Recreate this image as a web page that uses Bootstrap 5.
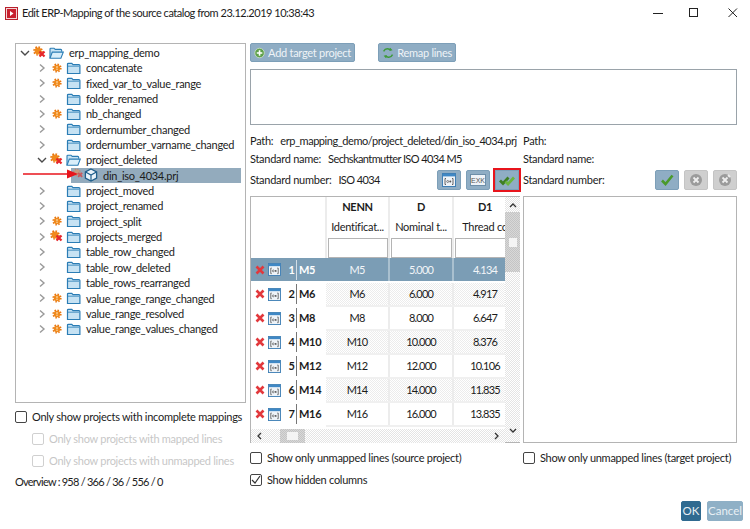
<!DOCTYPE html>
<html lang="en">
<head>
    <meta charset="UTF-8">
    <meta name="viewport" content="width=device-width, initial-scale=1.0">
    <title>Edit ERP-Mapping</title>
    <link href="https://cdn.jsdelivr.net/npm/bootstrap@5.3.0/dist/css/bootstrap.min.css" rel="stylesheet">
    <style>
        body {
            background: #fff;
            color: #1c1c1c;
            font-family: "Lato", "Liberation Sans", sans-serif;
            font-size: 11px;
            letter-spacing: -0.27px;
            line-height: 16px;
            height: 529px;
            overflow: hidden;
        }
        .win-title { height: 26px; padding-left: 5px; font-size: 11px; letter-spacing: -0.48px; }
        .win-title .title-text { margin-left: 4px; }
        .win-ctrls { padding-right: 12px; }
        .ctrl-max { margin: 0 29px 0 26px; }
        .dlg-main { padding: 17px 7px 0 15px; gap: 4px; }
        .left-col { width: 231px; flex: none; }
        .right-col { width: 487px; flex: none; }
        .tree-box { height: 360px; border: 1px solid #b4b4b4; padding-top: 1px; position: relative; }
        .tree-row { height: 15.35px; line-height: 15.35px; white-space: nowrap; }
        .lvl0 { margin-left: 2px; }
        .lvl1 { margin-left: 19px; }
        .lvl2 { margin-left: 55px; width: 170px; background: #93abbd; padding-left: 1px; }
        .s-chev { width: 14px; flex: none; }
        .s-mark { width: 17px; flex: none; }
        .s-fold { width: 15px; flex: none; margin-right: 5px; }
        .s-gear2 { width: 12px; flex: none; }
        .s-cube { flex: none; margin-right: 5px; }
        .tree-arrow { position: absolute; left: 7px; top: 125px; }

        .check-line { margin: 0; padding: 0; min-height: 0; gap: 5px; white-space: nowrap; }
        .check-line .form-check-input {
            float: none; margin: 0; width: 12px; height: 12px; flex: none;
            border: 1px solid #444; border-radius: 2px; background-color: #fff; opacity: 1;
        }
        .check-line .form-check-input:checked {
            background-color: #fff; border-color: #444;
            background-image: url("data:image/svg+xml,%3csvg xmlns='http://www.w3.org/2000/svg' viewBox='0 0 12 12'%3e%3cpath fill='none' stroke='%23333' stroke-width='1.2' d='M2 6l3 3 5-7'/%3e%3c/svg%3e");
            background-size: 12px 12px;
        }
        .check-line .form-check-input:disabled { border-color: #d0d0d0; }
        .check-line .form-check-label { opacity: 1; color: inherit; }
        .check-line.off .form-check-label { color: #8f8f8f; }
        .opts-left { padding-top: 3px; }
        .opts-left .check-line { height: 22px; }
        .opts-left .sub-opt { margin-left: 17px; }
        .overview-line { height: 20px; line-height: 20px; letter-spacing: -0.75px; }

        .blue-btn {
            --bs-btn-padding-x: 0; --bs-btn-padding-y: 0;
            --bs-btn-font-size: 11px; --bs-btn-line-height: 17px;
            --bs-btn-border-radius: 2px;
            background: #8fadc4; border: 1px solid #7d9fb8; color: #eef3f7;
            height: 19px; display: inline-flex; align-items: center; gap: 3px; padding: 0 3px;
            white-space: nowrap; letter-spacing: -0.27px;
        }
        .blue-btn:disabled { background: #8fadc4; border-color: #7d9fb8; color: #eef3f7; opacity: 1; }
        .btn-add { width: 105px; }
        .btn-remap { width: 78px; }
        .btn-row { height: 19px; gap: 23px; margin-bottom: 7px; }
        .note-box { height: 56px; border: 1px solid #9aa3aa; margin-bottom: 7px; }
        .src-col { width: 270px; flex: none; }
        .tgt-col { width: 214px; flex: none; margin-left: 3px; }
        .info-line { height: 18px; line-height: 18px; white-space: nowrap; }
        .info-line .info-val { margin-left: 7px; letter-spacing: -0.6px; }
        .info-line .info-path { letter-spacing: -0.45px; }
        .num-line { height: 24px; margin-bottom: 4px; align-items: center; }
        .tool-btn {
            width: 24px; height: 20px; border-radius: 2px; border: 1px solid #7d9fb8; background: #8fadc4;
            display: flex; align-items: center; justify-content: center; padding: 0;
        }
        .tool-btn.grey { background: #cfcfcf; border-color: #c4c4c4; }
        .tool-btn.marked { outline: 2px solid #e8141c; outline-offset: 0; border-radius: 0; }
        .tools-src { gap: 5px; margin-right: 1px; }
        .tools-tgt { gap: 5px; }
        .grid-wrap { height: 247px; border: 1px solid #b4b4b4; }
        .grid-view { width: 254px; flex: none; }
        .grid-clip { height: 232px; overflow: hidden; }
        .map-table { width: 266px; table-layout: fixed; margin: 0; }
        .map-table > :not(caption) > * > * {
            padding: 0; border: 0; box-shadow: none; color: #1c1c1c; background: #fff;
            text-align: center; vertical-align: middle; white-space: nowrap; overflow: hidden;
            border-right: 2px solid #ececec;
        }
        .map-table .head-a > * { height: 20px; font-weight: 700; }
        .map-table .head-b > * { height: 20px; font-weight: 400; }
        .map-table .head-c > * { height: 21px; padding: 0 0 0 1px; }
        .filter-box { display: block; width: 100%; height: 20px; border: 1px solid #b4b4b4; background: #fff; }
        .map-table tbody td { height: 24px; border-bottom: 2px solid #f0f0f0; letter-spacing: -0.8px; }
        .map-table tbody tr.alt td:not(.row-head) {
            background: conic-gradient(#ececec 25%, #fff 0 50%, #ececec 0 75%, #fff 0) 0 0 / 2px 2px;
        }
        .map-table tbody tr.sel td, .map-table tbody tr.sel td.row-head {
            background: #7b9db5; color: #f2f5f8; border-bottom-color: #fff; border-right-color: #a9c0cf;
        }
        .map-table tbody tr.sel td.row-head { color: #fff; }
        .map-table .row-head { text-align: left; border-right: 0; border-bottom-color: #fff; }
        .row-inner { gap: 0; align-items: center; height: 22px; padding-left: 4px; font-weight: 700; }
        .row-icon { margin-left: 3px; flex: none; }
        .row-no { width: 15px; text-align: right; padding-right: 2px; }
        .row-name { border-left: 1px solid #777; padding-left: 2px; line-height: 20px; letter-spacing: -0.3px; }
        .sel .row-name { border-left-color: #d3dee6; }
        .sb-v {
            width: 15px; flex: none; position: relative;
            background: conic-gradient(#e4e4e4 25%, #fff 0 50%, #e4e4e4 0 75%, #fff 0) 0 0 / 2px 2px;
        }
        .sb-v-up { height: 15px; }
        .sb-v-thumb {
            height: 60px; background: conic-gradient(#c4c4c4 25%, #d8d8d8 0 50%, #c4c4c4 0 75%, #d8d8d8 0) 0 0 / 2px 2px;
            padding-top: 26px;
        }
        .sb-v-thumb > div { width: 8px; height: 9px; background: #f4f4f4; margin: 0 auto; }
        .sb-h {
            height: 14px; padding: 0 5px;
            background: conic-gradient(#e4e4e4 25%, #fff 0 50%, #e4e4e4 0 75%, #fff 0) 0 0 / 2px 2px;
        }
        .sb-h-thumb {
            width: 25px; height: 14px; margin-left: 18px;
            background: conic-gradient(#c4c4c4 25%, #d8d8d8 0 50%, #c4c4c4 0 75%, #d8d8d8 0) 0 0 / 2px 2px;
            padding: 3px 7px;
        }
        .sb-h-thumb > div { height: 8px; background: #f4f4f4; }
        .target-box { height: 247px; border: 1px solid #b4b4b4; }
        .opts-line { height: 22px; }
        .opts-first { margin-top: 4px; }
        .dlg-foot { position: absolute; right: 7px; bottom: 8px; gap: 6px; }
        .foot-btn {
            --bs-btn-padding-x: 0; --bs-btn-padding-y: 0; --bs-btn-font-size: 11.5px; --bs-btn-border-radius: 2px;
            height: 20px; line-height: 18px; border: 1px solid transparent; color: #e8eff4;
        }
        .foot-ok { width: 20px; background: #2f6a90; border-color: #2f6a90; }
        .foot-cancel { width: 36px; background: #8fb0c6; border-color: #8fb0c6; }
        .foot-cancel:disabled { background: #8fb0c6; border-color: #8fb0c6; color: #e8eff4; opacity: 1; }
    </style>
</head>
<body>
    <svg width="0" height="0" class="position-absolute">
        <defs>
            <symbol id="i-chev-r" viewBox="0 0 14 14"><path d="M5 3.5l4 3.5-4 3.5" fill="none" stroke="#9a9a9a" stroke-width="1.4"/></symbol>
            <symbol id="i-chev-d" viewBox="0 0 14 14"><path d="M3 5l4 4 4-4" fill="none" stroke="#4a4a4a" stroke-width="1.4"/></symbol>
            <symbol id="i-gear" viewBox="0 0 12 12">
                <circle cx="6" cy="6" r="3.2" fill="#f08a1c"/>
                <circle cx="6" cy="6" r="3.8" fill="none" stroke="#e8760e" stroke-width="1.6" stroke-dasharray="1.5 1.49"/>
                <rect x="5.4" y="4" width="1.2" height="2.4" fill="#fbd9a8"/>
                <rect x="5.4" y="7" width="1.2" height="1" fill="#fbd9a8"/>
            </symbol>
            <symbol id="i-gear-x" viewBox="0 0 16 14">
                <circle cx="6" cy="5" r="3.4" fill="#f08a1c"/>
                <circle cx="6" cy="5" r="4" fill="none" stroke="#e8760e" stroke-width="1.6" stroke-dasharray="1.6 1.54"/>
                <path d="M7.5 5.5l5 5M12.5 5.5l-5 5" stroke="#e6252a" stroke-width="2.2"/>
            </symbol>
            <symbol id="i-gear-xf" viewBox="0 0 16 14">
                <circle cx="6" cy="5" r="3.4" fill="#c79a80"/>
                <circle cx="6" cy="5" r="4" fill="none" stroke="#bf8a70" stroke-width="1.6" stroke-dasharray="1.6 1.54"/>
                <path d="M7.5 5.5l5 5M12.5 5.5l-5 5" stroke="#c9575c" stroke-width="2.2"/>
            </symbol>
            <symbol id="i-folder" viewBox="0 0 15 14">
                <path d="M1.5 12.5V3.2q0-.9.9-.9h3.4l1.2 1.3h5.9q1 0 1 1v7.9z" fill="#c6e2f3" stroke="#2b7db5" stroke-width="1.2"/>
                <path d="M2 5.2h11" stroke="#2b7db5" stroke-width=".8"/>
            </symbol>
            <symbol id="i-folder-open" viewBox="0 0 15 14">
                <path d="M1 12V3q0-.8.8-.8h3.2l1.2 1.2h5.6q.9 0 .9 1v1.4" fill="#c6e2f3" stroke="#2b7db5" stroke-width="1.1"/>
                <path d="M1 12.3l2.3-6.2h11l-2.4 6.2z" fill="#d9eefa" stroke="#2b7db5" stroke-width="1.1"/>
            </symbol>
            <symbol id="i-cube" viewBox="0 0 14 14">
                <path d="M7 1l5.6 3v6L7 13l-5.6-3V4z" fill="#eaf4fa" stroke="#1f5f8b" stroke-width="1.3"/>
                <path d="M1.6 4L7 7l5.4-3M7 7v6" fill="none" stroke="#1f5f8b" stroke-width="1.2"/>
            </symbol>
            <symbol id="i-x" viewBox="0 0 10 10"><path d="M1.5 1.5l7 7M8.5 1.5l-7 7" stroke="#e2383c" stroke-width="2.6"/></symbol>
            <symbol id="i-bracket" viewBox="0 0 14 14">
                <rect x=".5" y=".5" width="13" height="13" fill="#eef3f8" stroke="#3f7fb5"/>
                <rect x="1" y="1" width="12" height="2.4" fill="#3f88c5"/>
                <path d="M4 5.5H3v6h1M10 5.5h1v6h-1" fill="none" stroke="#555" stroke-width=".9"/>
                <circle cx="5.7" cy="8.5" r="1" fill="none" stroke="#555" stroke-width=".7"/>
                <circle cx="8.3" cy="8.5" r="1" fill="#555"/>
            </symbol>
            <symbol id="i-check2" viewBox="0 0 16 12">
                <path d="M1 6.5l3 3 5.5-6" fill="none" stroke="#3e7f22" stroke-width="2.8"/>
                <path d="M6.5 7.5l2.5 2.5 6-6.5" fill="none" stroke="#6bb53f" stroke-width="2.8"/>
            </symbol>
            <symbol id="i-check" viewBox="0 0 14 12"><path d="M2 6.5l3.5 3.5L12.5 1.5" fill="none" stroke="#4a9a2c" stroke-width="2.6"/></symbol>
        </defs>
    </svg>

    <div class="win-title d-flex align-items-center justify-content-between">
        <div class="d-flex align-items-center">
            <svg width="13" height="13" viewBox="0 0 13 13"><rect x=".5" y=".5" width="12" height="12" fill="#f3d6d6" stroke="#b81f2c"/><rect x="2" y="2" width="9" height="9" fill="#c8202e"/><path d="M5 4l3.5 2.5L5 9z" fill="#fff"/></svg>
            <span class="title-text">Edit ERP-Mapping of the source catalog from 23.12.2019 10:38:43</span>
        </div>
        <div class="win-ctrls d-flex align-items-center">
            <svg width="10" height="10" viewBox="0 0 10 10"><path d="M0 5.5h10" stroke="#222"/></svg>
            <svg width="10" height="10" viewBox="0 0 10 10" class="ctrl-max"><rect x=".5" y=".5" width="8" height="8" fill="none" stroke="#222"/></svg>
            <svg width="10" height="10" viewBox="0 0 10 10"><path d="M.5.5l8.5 8.5M9 .5L.5 9" stroke="#222"/></svg>
        </div>
    </div>

    <div class="dlg-main d-flex">
        <div class="left-col">
            <div class="tree-box">
                <div class="tree-row lvl0 d-flex align-items-center"><svg class="s-chev" height="14"><use href="#i-chev-d"/></svg><svg class="s-mark" height="14" viewBox="0 0 17 14"><use href="#i-gear-x" width="16" height="14"/></svg><svg class="s-fold" height="14"><use href="#i-folder-open"/></svg>erp_mapping_demo</div>
                <div class="tree-row lvl1 d-flex align-items-center"><svg class="s-chev" height="14"><use href="#i-chev-r"/></svg><svg class="s-mark" height="12" viewBox="0 0 17 12"><use href="#i-gear" x="2" width="12" height="12"/></svg><svg class="s-fold" height="14"><use href="#i-folder"/></svg>concatenate</div>
                <div class="tree-row lvl1 d-flex align-items-center"><svg class="s-chev" height="14"><use href="#i-chev-r"/></svg><svg class="s-mark" height="12" viewBox="0 0 17 12"><use href="#i-gear" x="2" width="12" height="12"/></svg><svg class="s-fold" height="14"><use href="#i-folder"/></svg>fixed_var_to_value_range</div>
                <div class="tree-row lvl1 d-flex align-items-center"><svg class="s-chev" height="14"><use href="#i-chev-r"/></svg><span class="s-mark"></span><svg class="s-fold" height="14"><use href="#i-folder"/></svg>folder_renamed</div>
                <div class="tree-row lvl1 d-flex align-items-center"><svg class="s-chev" height="14"><use href="#i-chev-r"/></svg><svg class="s-mark" height="12" viewBox="0 0 17 12"><use href="#i-gear" x="2" width="12" height="12"/></svg><svg class="s-fold" height="14"><use href="#i-folder"/></svg>nb_changed</div>
                <div class="tree-row lvl1 d-flex align-items-center"><svg class="s-chev" height="14"><use href="#i-chev-r"/></svg><span class="s-mark"></span><svg class="s-fold" height="14"><use href="#i-folder"/></svg>ordernumber_changed</div>
                <div class="tree-row lvl1 d-flex align-items-center"><svg class="s-chev" height="14"><use href="#i-chev-r"/></svg><span class="s-mark"></span><svg class="s-fold" height="14"><use href="#i-folder"/></svg>ordernumber_varname_changed</div>
                <div class="tree-row lvl1 d-flex align-items-center"><svg class="s-chev" height="14"><use href="#i-chev-d"/></svg><svg class="s-mark" height="14" viewBox="0 0 17 14"><use href="#i-gear-x" width="16" height="14"/></svg><svg class="s-fold" height="14"><use href="#i-folder-open"/></svg>project_deleted</div>
                <div class="tree-row lvl2 d-flex align-items-center"><svg class="s-gear2" height="14"><use href="#i-gear-xf" width="13" height="12"/></svg><svg width="14" height="14" class="s-cube"><use href="#i-cube"/></svg><span>din_iso_4034.prj</span></div>
                <div class="tree-row lvl1 d-flex align-items-center"><svg class="s-chev" height="14"><use href="#i-chev-r"/></svg><span class="s-mark"></span><svg class="s-fold" height="14"><use href="#i-folder"/></svg>project_moved</div>
                <div class="tree-row lvl1 d-flex align-items-center"><svg class="s-chev" height="14"><use href="#i-chev-r"/></svg><span class="s-mark"></span><svg class="s-fold" height="14"><use href="#i-folder"/></svg>project_renamed</div>
                <div class="tree-row lvl1 d-flex align-items-center"><svg class="s-chev" height="14"><use href="#i-chev-r"/></svg><svg class="s-mark" height="12" viewBox="0 0 17 12"><use href="#i-gear" x="2" width="12" height="12"/></svg><svg class="s-fold" height="14"><use href="#i-folder"/></svg>project_split</div>
                <div class="tree-row lvl1 d-flex align-items-center"><svg class="s-chev" height="14"><use href="#i-chev-r"/></svg><svg class="s-mark" height="14" viewBox="0 0 17 14"><use href="#i-gear-x" width="16" height="14"/></svg><svg class="s-fold" height="14"><use href="#i-folder"/></svg>projects_merged</div>
                <div class="tree-row lvl1 d-flex align-items-center"><svg class="s-chev" height="14"><use href="#i-chev-r"/></svg><span class="s-mark"></span><svg class="s-fold" height="14"><use href="#i-folder"/></svg>table_row_changed</div>
                <div class="tree-row lvl1 d-flex align-items-center"><svg class="s-chev" height="14"><use href="#i-chev-r"/></svg><span class="s-mark"></span><svg class="s-fold" height="14"><use href="#i-folder"/></svg>table_row_deleted</div>
                <div class="tree-row lvl1 d-flex align-items-center"><svg class="s-chev" height="14"><use href="#i-chev-r"/></svg><span class="s-mark"></span><svg class="s-fold" height="14"><use href="#i-folder"/></svg>table_rows_rearranged</div>
                <div class="tree-row lvl1 d-flex align-items-center"><svg class="s-chev" height="14"><use href="#i-chev-r"/></svg><svg class="s-mark" height="12" viewBox="0 0 17 12"><use href="#i-gear" x="2" width="12" height="12"/></svg><svg class="s-fold" height="14"><use href="#i-folder"/></svg>value_range_range_changed</div>
                <div class="tree-row lvl1 d-flex align-items-center"><svg class="s-chev" height="14"><use href="#i-chev-r"/></svg><svg class="s-mark" height="12" viewBox="0 0 17 12"><use href="#i-gear" x="2" width="12" height="12"/></svg><svg class="s-fold" height="14"><use href="#i-folder"/></svg>value_range_resolved</div>
                <div class="tree-row lvl1 d-flex align-items-center"><svg class="s-chev" height="14"><use href="#i-chev-r"/></svg><svg class="s-mark" height="12" viewBox="0 0 17 12"><use href="#i-gear" x="2" width="12" height="12"/></svg><svg class="s-fold" height="14"><use href="#i-folder"/></svg>value_range_values_changed</div>
                <svg class="tree-arrow" width="55" height="10" viewBox="0 0 55 10"><path d="M0 5h46" stroke="#e8141c" stroke-width="1.4"/><path d="M44 .5L55 5 44 9.5z" fill="#e8141c"/></svg>
            </div>
            <div class="opts-left">
                <div class="form-check check-line d-flex align-items-center"><input class="form-check-input" type="checkbox" id="optInc"><label class="form-check-label" for="optInc">Only show projects with incomplete mappings</label></div>
                <div class="form-check check-line off sub-opt d-flex align-items-center"><input class="form-check-input" type="checkbox" id="optMap" disabled><label class="form-check-label" for="optMap">Only show projects with mapped lines</label></div>
                <div class="form-check check-line off sub-opt d-flex align-items-center"><input class="form-check-input" type="checkbox" id="optUnm" disabled><label class="form-check-label" for="optUnm">Only show projects with unmapped lines</label></div>
                <div class="overview-line">Overview : 958 / 366 / 36 / 556 / 0</div>
            </div>
        </div>

        <div class="right-col">
            <div class="btn-row d-flex">
                <button type="button" class="btn blue-btn btn-add" disabled>
                    <svg width="14" height="14" viewBox="0 0 14 14"><circle cx="7" cy="7" r="6" fill="#5ea04a" stroke="#cfe3c6"/><path d="M7 3.5v7M3.5 7h7" stroke="#fff" stroke-width="2"/></svg>
                    Add target project
                </button>
                <button type="button" class="btn blue-btn btn-remap" disabled>
                    <svg width="15" height="14" viewBox="0 0 15 14"><path d="M2 5q2-4 6-3l3 1M13 9q-2 4-6 3l-3-1" fill="none" stroke="#3f9a3a" stroke-width="1.8"/><path d="M10 .5l3 3-4 1zM5 13.5l-3-3 4-1z" fill="#3f9a3a"/></svg>
                    Remap lines
                </button>
            </div>
            <div class="note-box"></div>
            <div class="d-flex">
                <div class="src-col">
                    <div class="info-line">Path:<span class="info-val info-path">erp_mapping_demo/project_deleted/din_iso_4034.prj</span></div>
                    <div class="info-line">Standard name:<span class="info-val">Sechskantmutter ISO 4034 M5</span></div>
                    <div class="info-line num-line d-flex justify-content-between">
                        <div>Standard number:<span class="info-val">ISO 4034</span></div>
                        <div class="tools-src d-flex">
                            <button type="button" class="tool-btn"><svg width="14" height="14"><use href="#i-bracket"/></svg></button>
                            <button type="button" class="tool-btn"><svg width="16" height="12" viewBox="0 0 16 12"><rect x=".5" y=".5" width="15" height="11" fill="#eef3f8" stroke="#6d8ea8"/><text x="8" y="9" font-size="7" text-anchor="middle" fill="#555" font-family="Liberation Sans">EXK</text></svg></button>
                            <button type="button" class="tool-btn marked"><svg width="16" height="12"><use href="#i-check2"/></svg></button>
                        </div>
                    </div>
                    <div class="grid-wrap d-flex">
                        <div class="grid-view">
                            <div class="grid-clip">
                                <table class="table table-borderless map-table">
                                    <colgroup><col style="width:75px"><col style="width:63px"><col style="width:64px"><col style="width:64px"></colgroup>
                                    <thead>
                                        <tr class="head-a"><th></th><th>NENN</th><th>D</th><th>D1</th></tr>
                                        <tr class="head-b"><th></th><th>Identificat...</th><th>Nominal t...</th><th>Thread co</th></tr>
                                        <tr class="head-c"><th></th><th><span class="filter-box"></span></th><th><span class="filter-box"></span></th><th><span class="filter-box"></span></th></tr>
                                    </thead>
                                    <tbody>
                                        <tr class="sel"><td class="row-head"><div class="row-inner d-flex"><svg width="10" height="10"><use href="#i-x"/></svg><svg width="13" height="13" class="row-icon"><use href="#i-bracket"/></svg><span class="row-no">1</span><span class="row-name">M5</span></div></td><td>M5</td><td>5.000</td><td>4.134</td></tr>
                                        <tr class="alt"><td class="row-head"><div class="row-inner d-flex"><svg width="10" height="10"><use href="#i-x"/></svg><svg width="13" height="13" class="row-icon"><use href="#i-bracket"/></svg><span class="row-no">2</span><span class="row-name">M6</span></div></td><td>M6</td><td>6.000</td><td>4.917</td></tr>
                                        <tr><td class="row-head"><div class="row-inner d-flex"><svg width="10" height="10"><use href="#i-x"/></svg><svg width="13" height="13" class="row-icon"><use href="#i-bracket"/></svg><span class="row-no">3</span><span class="row-name">M8</span></div></td><td>M8</td><td>8.000</td><td>6.647</td></tr>
                                        <tr class="alt"><td class="row-head"><div class="row-inner d-flex"><svg width="10" height="10"><use href="#i-x"/></svg><svg width="13" height="13" class="row-icon"><use href="#i-bracket"/></svg><span class="row-no">4</span><span class="row-name">M10</span></div></td><td>M10</td><td>10.000</td><td>8.376</td></tr>
                                        <tr><td class="row-head"><div class="row-inner d-flex"><svg width="10" height="10"><use href="#i-x"/></svg><svg width="13" height="13" class="row-icon"><use href="#i-bracket"/></svg><span class="row-no">5</span><span class="row-name">M12</span></div></td><td>M12</td><td>12.000</td><td>10.106</td></tr>
                                        <tr class="alt"><td class="row-head"><div class="row-inner d-flex"><svg width="10" height="10"><use href="#i-x"/></svg><svg width="13" height="13" class="row-icon"><use href="#i-bracket"/></svg><span class="row-no">6</span><span class="row-name">M14</span></div></td><td>M14</td><td>14.000</td><td>11.835</td></tr>
                                        <tr><td class="row-head"><div class="row-inner d-flex"><svg width="10" height="10"><use href="#i-x"/></svg><svg width="13" height="13" class="row-icon"><use href="#i-bracket"/></svg><span class="row-no">7</span><span class="row-name">M16</span></div></td><td>M16</td><td>16.000</td><td>13.835</td></tr>
                                    </tbody>
                                </table>
                            </div>
                            <div class="sb-h d-flex align-items-center justify-content-between">
                                <svg width="6" height="8" viewBox="0 0 6 8"><path d="M5 1L2 4l3 3" fill="none" stroke="#333" stroke-width="1.3"/></svg>
                                <div class="sb-h-thumb me-auto"><div></div></div>
                                <svg width="6" height="8" viewBox="0 0 6 8"><path d="M1 1l3 3-3 3" fill="none" stroke="#333" stroke-width="1.3"/></svg>
                            </div>
                        </div>
                        <div class="sb-v d-flex flex-column">
                            <div class="sb-v-up d-flex align-items-center justify-content-center"><svg width="8" height="6" viewBox="0 0 8 6"><path d="M1 5l3-3 3 3" fill="none" stroke="#333" stroke-width="1.3"/></svg></div>
                            <div class="sb-v-thumb"><div></div></div>
                            <div class="mt-auto d-flex justify-content-center pb-2"><svg width="8" height="6" viewBox="0 0 8 6"><path d="M1 1l3 3 3-3" fill="none" stroke="#333" stroke-width="1.3"/></svg></div>
                        </div>
                    </div>
                    <div class="opts-first form-check check-line opts-line d-flex align-items-center"><input class="form-check-input" type="checkbox" id="optSrc"><label class="form-check-label" for="optSrc">Show only unmapped lines (source project)</label></div>
                    <div class="form-check check-line opts-line d-flex align-items-center"><input class="form-check-input" type="checkbox" id="optHid" checked><label class="form-check-label" for="optHid">Show hidden columns</label></div>
                </div>
                <div class="tgt-col">
                    <div class="info-line">Path:</div>
                    <div class="info-line">Standard name:</div>
                    <div class="info-line num-line d-flex justify-content-between">
                        <div>Standard number:</div>
                        <div class="tools-tgt d-flex">
                            <button type="button" class="tool-btn"><svg width="14" height="12"><use href="#i-check"/></svg></button>
                            <button type="button" class="tool-btn grey"><svg width="14" height="14" viewBox="0 0 14 14"><circle cx="7" cy="7" r="6" fill="#9b9b9b"/><path d="M4.5 4.5l5 5M9.5 4.5l-5 5" stroke="#eee" stroke-width="1.8"/></svg></button>
                            <button type="button" class="tool-btn grey"><svg width="14" height="14" viewBox="0 0 14 14"><circle cx="7" cy="7" r="6" fill="#9b9b9b"/><path d="M4.5 4.5l5 5M9.5 4.5l-5 5M10 2l2 2" stroke="#eee" stroke-width="1.8"/></svg></button>
                        </div>
                    </div>
                    <div class="target-box"></div>
                    <div class="opts-first form-check check-line opts-line d-flex align-items-center"><input class="form-check-input" type="checkbox" id="optTgt"><label class="form-check-label" for="optTgt">Show only unmapped lines (target project)</label></div>
                </div>
            </div>
        </div>
    </div>

    <div class="dlg-foot d-flex">
        <button type="button" class="btn foot-btn foot-ok">OK</button>
        <button type="button" class="btn foot-btn foot-cancel" disabled>Cancel</button>
    </div>

    <script src="https://cdn.jsdelivr.net/npm/bootstrap@5.3.0/dist/js/bootstrap.bundle.min.js"></script>
</body>
</html>
